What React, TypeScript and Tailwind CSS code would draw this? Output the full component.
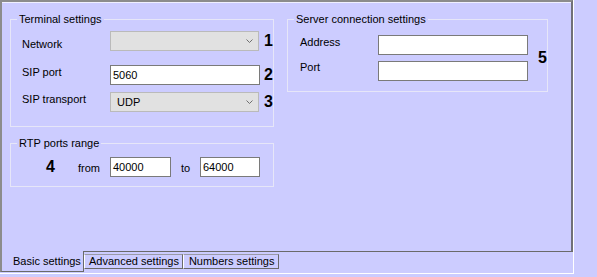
import React from "react";

function Chevron() {
  return (
    <svg width="7" height="4" viewBox="0 0 7 4">
      <polyline points="0.5,0.5 3.5,3.5 6.5,0.5" fill="none" stroke="#6f6f6f" strokeWidth="1" />
    </svg>
  );
}

function Select({ value }: { value?: string }) {
  return (
    <div className="flex h-[20px] w-[149px] items-center justify-between border border-[#bababa] bg-[#e1e1e1] pl-[6px] pr-[5px]">
      <span>{value}</span>
      <Chevron />
    </div>
  );
}

function Input({ value, className }: { value?: string; className: string }) {
  return (
    <div className={`flex h-[20px] items-center border border-[#7a7a7a] bg-white pl-[2px] ${className}`}>
      {value}
    </div>
  );
}

function Num({ n, className = "" }: { n: string; className?: string }) {
  return <span className={`text-[16px] font-bold leading-[20px] ${className}`}>{n}</span>;
}

function Group({ title, className, children }: { title: string; className: string; children: React.ReactNode }) {
  return (
    <div className={`relative border border-[#e6e6f8] ${className}`}>
      <span className="absolute -top-[7px] left-[6px] bg-[#ccccff] px-[2px] leading-[13px]">{title}</span>
      {children}
    </div>
  );
}

export default function App() {
  return (
    <div className="h-[277px] w-[597px] overflow-hidden bg-[#ccccff] font-['Liberation_Sans',Arial,sans-serif] text-[11px] leading-[13px] text-black">
      <div className="flex h-[274px] w-[574px] flex-col border-b border-r border-white">
        <div className="flex h-[251px] items-start gap-[13px] border-l-2 border-r-2 border-t-2 border-l-[#8c8c8c] border-r-[#707078] border-t-[#8c8c8c] pl-[8px] pt-[17px] shadow-[inset_0_1px_0_#f0f0ff]">
          <div className="flex w-[264px] flex-col">
            <Group title="Terminal settings" className="w-[264px]">
              <div className="flex flex-col pb-[14px] pl-[11px] pt-[11px]">
                <div className="flex h-[20px] items-start">
                  <span className="mt-[7px] w-[88px]">Network</span>
                  <div className="w-[150px]">
                    <Select />
                  </div>
                  <Num n="1" className="ml-[4px]" />
                </div>
                <div className="mt-[14px] flex h-[20px] items-start">
                  <span className="mt-[1px] w-[88px]">SIP port</span>
                  <Input value="5060" className="w-[150px]" />
                  <Num n="2" className="ml-[4px]" />
                </div>
                <div className="mt-[7px] flex h-[20px] items-start">
                  <span className="mt-[1px] w-[88px]">SIP transport</span>
                  <div className="w-[150px]">
                    <Select value="UDP" />
                  </div>
                  <Num n="3" className="ml-[4px]" />
                </div>
              </div>
            </Group>
            <Group title="RTP ports range" className="mt-[16px] w-[264px]">
              <div className="flex items-start pb-[9px] pl-[35px] pt-[13px]">
                <Num n="4" className="w-[32px]" />
                <span className="mt-[5px] w-[32px]">from</span>
                <Input value="40000" className="w-[61px]" />
                <span className="ml-[10px] mt-[5px] w-[19px]">to</span>
                <Input value="64000" className="w-[60px]" />
              </div>
            </Group>
          </div>
          <Group title="Server connection settings" className="w-[261px]">
            <div className="flex items-center pb-[10px] pl-[12px] pt-[15px]">
              <div className="flex flex-col">
                <div className="flex h-[20px] items-start">
                  <span className="mt-[1px] w-[78px]">Address</span>
                  <Input className="w-[150px]" />
                </div>
                <div className="mt-[6px] flex h-[20px] items-start">
                  <span className="w-[78px]">Port</span>
                  <Input className="w-[150px]" />
                </div>
              </div>
              <Num n="5" className="ml-[10px]" />
            </div>
          </Group>
        </div>
        <div className="flex h-[21px] items-start">
          <div className="flex h-[21px] w-[84px] items-center whitespace-nowrap border-b border-l-2 border-r border-b-[#6a6a6a] border-l-[#8c8c8c] border-r-[#6a6a6a] pl-[11px]">
            Basic settings
          </div>
          <div className="flex h-[21px] flex-1 items-start border-t border-t-[#6a6a6a]">
            <div className="mt-[2px] flex h-[15px] items-center whitespace-nowrap border border-b-[#6a6a6a] border-l-white border-r-[#6a6a6a] border-t-[#9a9aa6] pl-[4px] pr-[3px]">
              Advanced settings
            </div>
            <div className="mt-[2px] flex h-[15px] items-center whitespace-nowrap border border-b-[#6a6a6a] border-l-white border-r-[#6a6a6a] border-t-[#9a9aa6] pl-[5px] pr-[4px]">
              Numbers settings
            </div>
          </div>
        </div>
      </div>
    </div>
  );
}
